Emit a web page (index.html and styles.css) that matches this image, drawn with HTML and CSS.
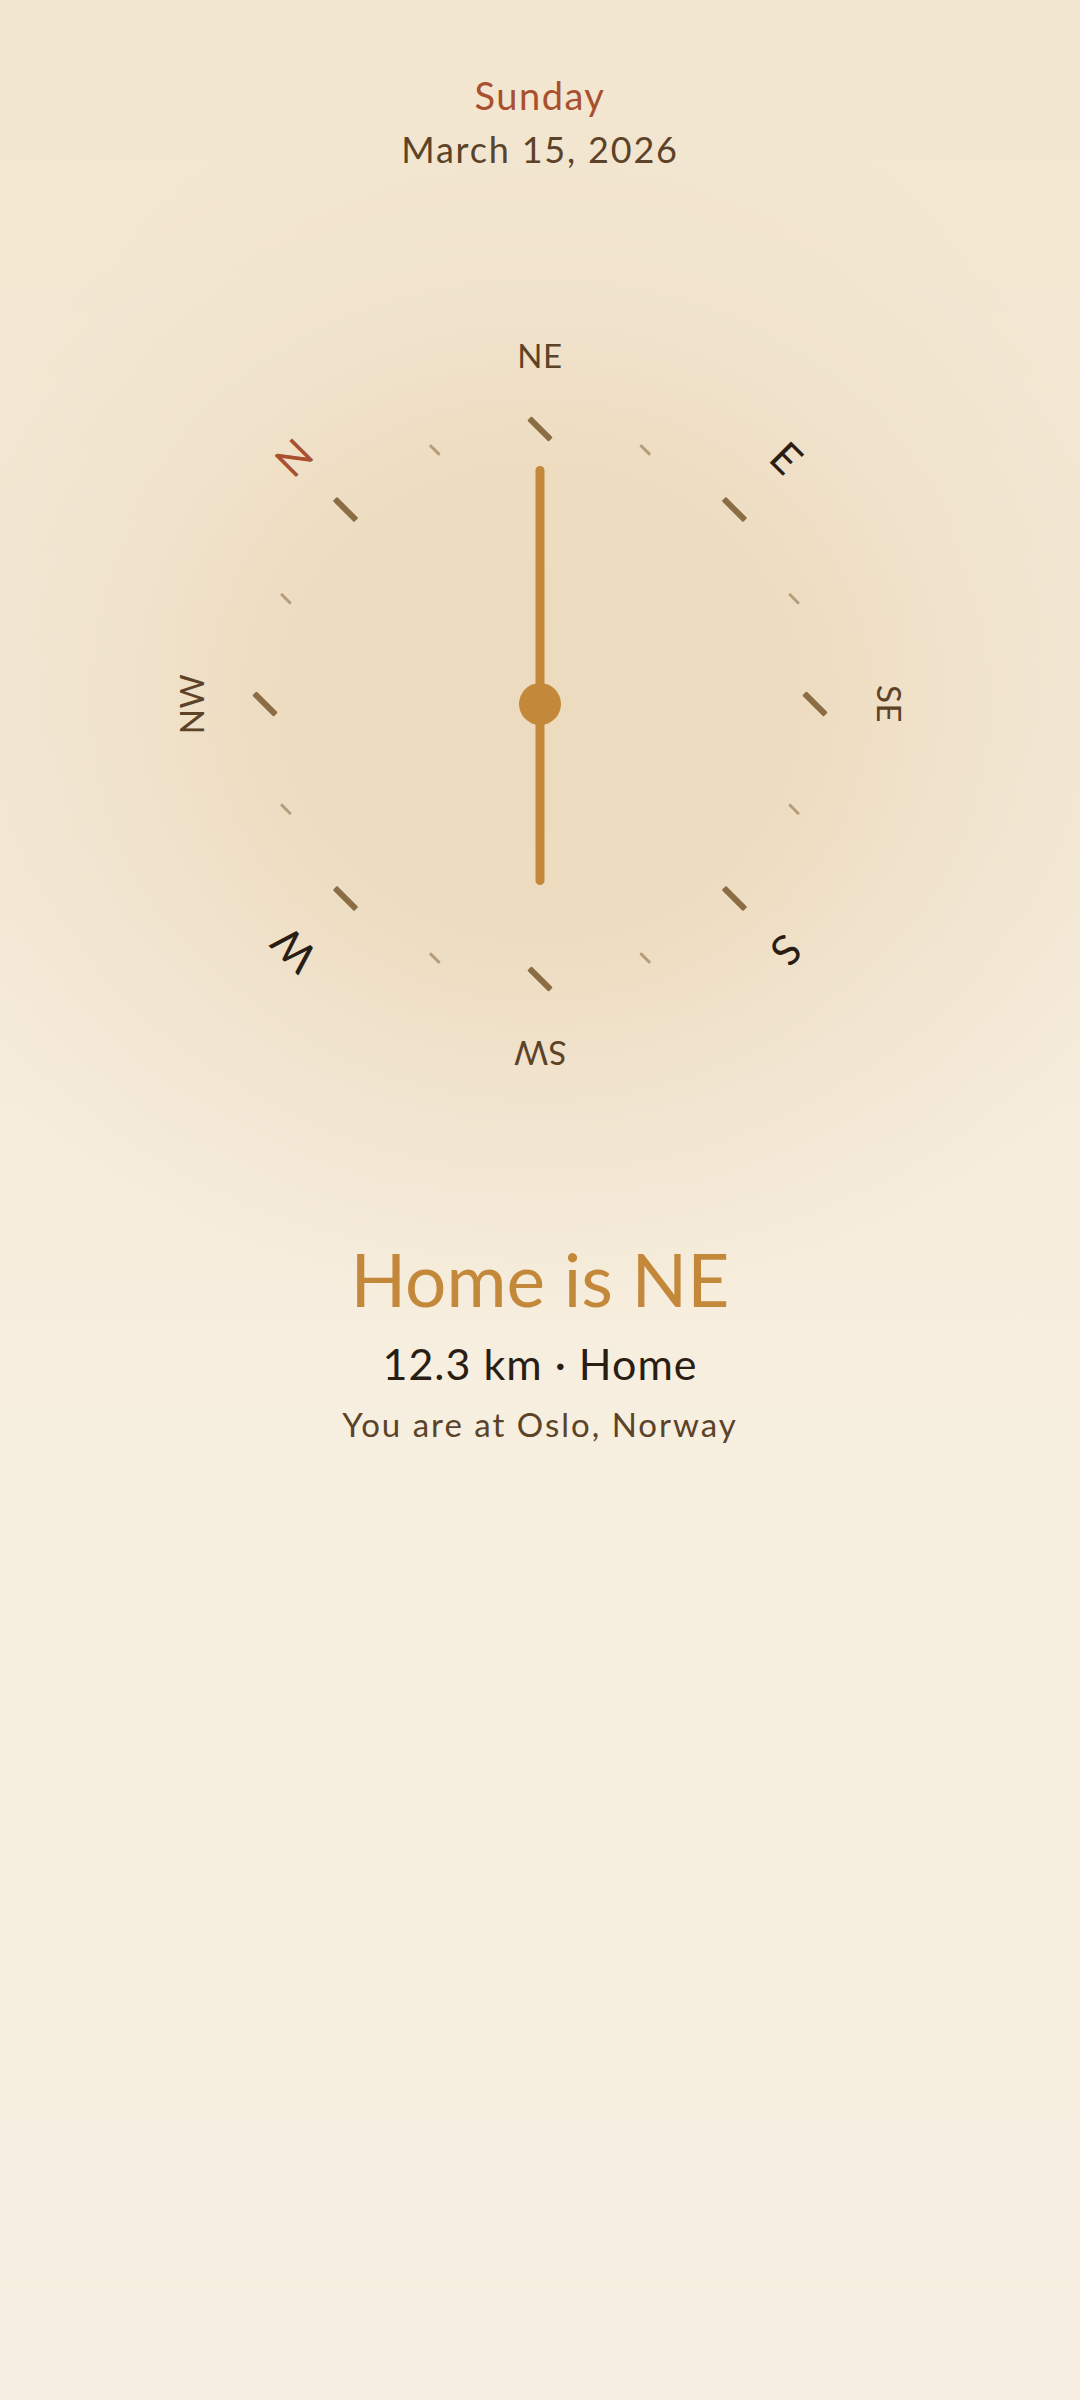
FILE: index.html
```html
<!DOCTYPE html>
<html lang="en">
<head>
<meta charset="utf-8">
<title>Home Compass</title>
<link rel="stylesheet" href="styles.css">
</head>
<body>
<main class="page">
  <header class="date">
    <div class="weekday">Sunday</div>
    <div class="fulldate">March 15, 2026</div>
  </header>

  <section class="compass" aria-label="Compass">
    <div class="tick major a0"></div>
    <div class="tick minor a23"></div>
    <div class="tick major a45"></div>
    <div class="tick minor a68"></div>
    <div class="tick major a90"></div>
    <div class="tick minor a113"></div>
    <div class="tick major a135"></div>
    <div class="tick minor a158"></div>
    <div class="tick major a180"></div>
    <div class="tick minor a203"></div>
    <div class="tick major a225"></div>
    <div class="tick minor a248"></div>
    <div class="tick major a270"></div>
    <div class="tick minor a293"></div>
    <div class="tick major a315"></div>
    <div class="tick minor a338"></div>

    <div class="label inter a0">NE</div>
    <div class="label card a45">E</div>
    <div class="label inter a90">SE</div>
    <div class="label card a135">S</div>
    <div class="label inter a180">SW</div>
    <div class="label card a225">W</div>
    <div class="label inter a270">NW</div>
    <div class="label card north a315">N</div>

    <div class="needle"></div>
    <div class="hub"></div>
  </section>

  <section class="readout">
    <h1 class="heading">Home is NE</h1>
    <div class="distance">12.3 km · Home</div>
    <div class="location">You are at Oslo, Norway</div>
  </section>
</main>
</body>
</html>
```

FILE: styles.css
```css
html, body {
  margin: 0;
  padding: 0;
}

body {
  width: 1080px;
  height: 2400px;
  font-family: "Lato", "Noto Sans", sans-serif;
  background-color: #f7efe0;
  background-image:
    radial-gradient(ellipse 680px 620px at 540px 702px, #ecdbbe 0%, #eddcc0 38%, rgba(240, 226, 204, 0.7) 68%, rgba(247, 239, 224, 0) 100%),
    linear-gradient(180deg, #f3e6d0 0px, #f5ebd9 900px, #f7efe0 1500px, #f7f0e2 2400px);
  background-repeat: no-repeat;
  overflow: hidden;
}

.page {
  display: flex;
  flex-direction: column;
  align-items: center;
}

.date {
  display: flex;
  flex-direction: column;
  align-items: center;
  padding-top: 75px;
  gap: 14px;
}

.weekday {
  font-size: 38px;
  line-height: 40px;
  letter-spacing: 1.5px;
  color: #a9502e;
}

.fulldate {
  font-size: 36px;
  line-height: 40px;
  letter-spacing: 1.8px;
  color: #5c4328;
}

.compass {
  position: relative;
  width: 760px;
  height: 760px;
  margin-top: 155px;
}

.tick,
.label,
.needle,
.hub {
  position: absolute;
  left: 50%;
  top: 50%;
}

.a0   { --a: 0deg; }
.a23  { --a: 22.5deg; }
.a45  { --a: 45deg; }
.a68  { --a: 67.5deg; }
.a90  { --a: 90deg; }
.a113 { --a: 112.5deg; }
.a135 { --a: 135deg; }
.a158 { --a: 157.5deg; }
.a180 { --a: 180deg; }
.a203 { --a: 202.5deg; }
.a225 { --a: 225deg; }
.a248 { --a: 247.5deg; }
.a270 { --a: 270deg; }
.a293 { --a: 292.5deg; }
.a315 { --a: 315deg; }
.a338 { --a: 337.5deg; }

.tick {
  transform: translate(-50%, -50%) rotate(var(--a)) translateY(-275px) rotate(calc(-1 * var(--a))) rotate(-45deg);
  border-radius: 1px;
}

.tick.major {
  width: 6px;
  height: 30px;
  background: #8b6d45;
}

.tick.minor {
  width: 3px;
  height: 14px;
  background: #b59d7a;
}

.label {
  transform: translate(-50%, -50%) rotate(var(--a)) translateY(-349px);
  line-height: 1;
  white-space: nowrap;
}

.label.inter {
  font-size: 33px;
  color: #5c4328;
  letter-spacing: 0.5px;
}

.label.card {
  font-size: 42px;
  color: #2a1e14;
}

.label.north {
  color: #a9502e;
}

.needle {
  width: 9px;
  height: 419px;
  border-radius: 5px;
  background: #c4883a;
  transform: translate(-50%, -238px);
}

.hub {
  width: 42px;
  height: 42px;
  border-radius: 50%;
  background: #c4883a;
  transform: translate(-50%, -50%);
}

.readout {
  display: flex;
  flex-direction: column;
  align-items: center;
  margin-top: 155px;
}

.heading {
  margin: 0;
  font-weight: 400;
  font-size: 73px;
  line-height: 80px;
  color: #c4883a;
}

.distance {
  margin-top: 21px;
  font-size: 43px;
  line-height: 48px;
  color: #2a1e14;
  letter-spacing: 1px;
}

.location {
  margin-top: 16px;
  font-size: 33px;
  line-height: 40px;
  letter-spacing: 2px;
  color: #5c4328;
}
```
